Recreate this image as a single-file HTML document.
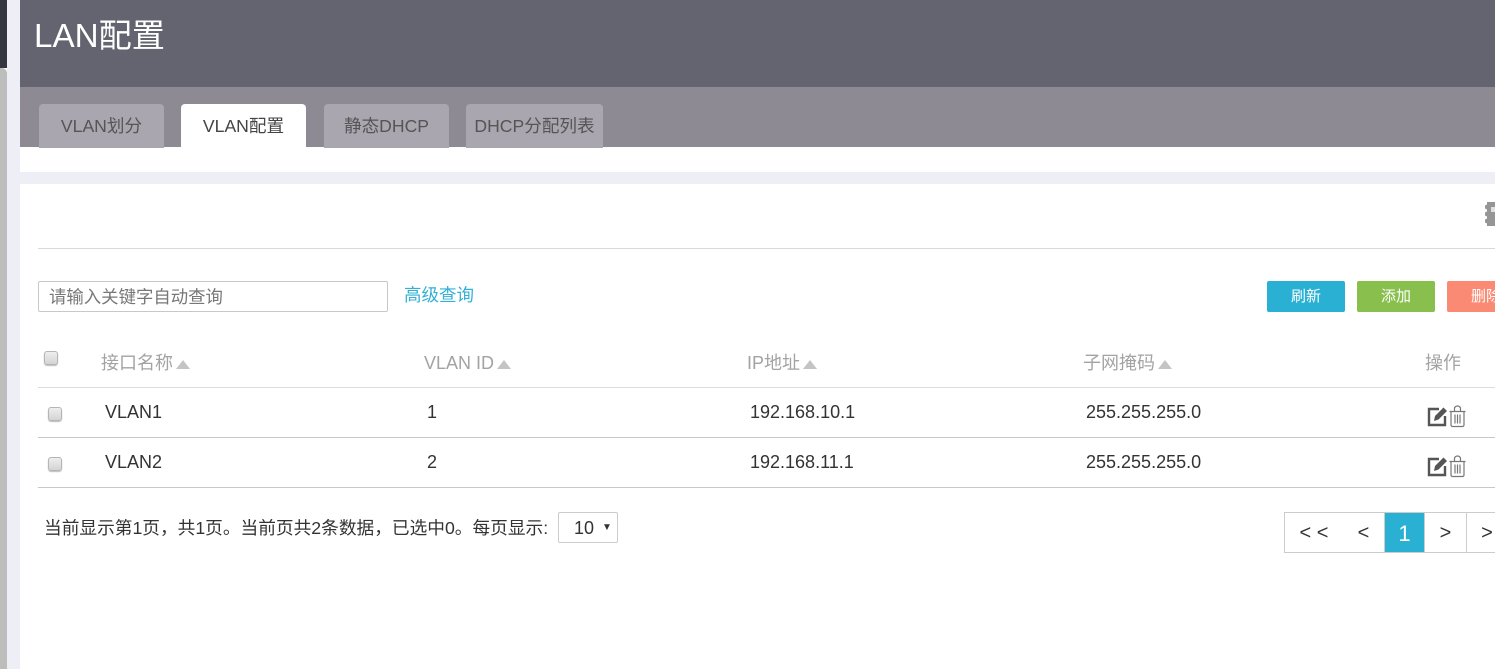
<!DOCTYPE html>
<html><head><meta charset="utf-8"><style>
html,body{margin:0;padding:0;width:1495px;height:669px;overflow:hidden;background:#fff;font-family:"Liberation Sans","Noto Sans CJK SC",sans-serif;color:#333}
.a{position:absolute;white-space:nowrap}
.tab{position:absolute;top:104px;height:44px;background:#aaa6b0;border-radius:4px 4px 0 0;text-align:center;line-height:45px;font-size:17.6px;color:#555}
.h{position:absolute;top:351px;font-size:18px;line-height:24px;color:#a3a3a3;white-space:nowrap}
.h i{display:inline-block;width:0;height:0;border-left:7px solid transparent;border-right:7px solid transparent;border-bottom:9px solid #c4c4c4;margin-left:3px;vertical-align:0}
.c{position:absolute;font-size:18px;line-height:24px;color:#333;white-space:nowrap}
.cb{position:absolute;width:12px;height:12px;border:1px solid #b5b5b5;border-radius:3px;background:linear-gradient(#eee,#d4d4d4);box-shadow:0 1px 1px #bbb}
.line{position:absolute;left:38px;width:1457px;height:1px}
.btn{position:absolute;top:281px;width:78px;height:31px;border-radius:2px;color:#fff;text-align:center;line-height:32px;font-size:15px}
.pg{position:absolute;top:512px;height:39px;border:1px solid #ccc;border-left:none;background:#fff;text-align:center;line-height:41px;font-size:20px;color:#333}
</style></head><body>
<div class="a" style="left:0;top:0;width:7px;height:68px;background:#33353f"></div>
<div class="a" style="left:0;top:68px;width:7px;height:601px;background:#bdbdbb;border-radius:0 5px 0 0"></div>
<div class="a" style="left:7px;top:0;width:13px;height:669px;background:#eeeef7"></div>
<div class="a" style="left:20px;top:0;width:1475px;height:87px;background:#636470"></div>
<div class="a" style="left:20px;top:87px;width:1475px;height:60px;background:#8d8a94"></div>
<div class="a" style="left:19px;top:172px;width:1476px;height:12px;background:#eeeef7"></div>
<div class="a" style="left:34px;top:15px;font-size:33.200px;line-height:44px;color:#fff">LAN配置</div>

<div class="tab" style="left:39px;width:125px">VLAN划分</div>
<div class="tab" style="left:181px;width:125px;background:#fff;height:43px;color:#444">VLAN配置</div>
<div class="tab" style="left:324px;width:125px">静态DHCP</div>
<div class="tab" style="left:466px;width:137px">DHCP分配列表</div>

<svg class="a" style="left:1484px;top:201px" width="11" height="26" viewBox="0 0 11 26"><path d="M3 1h8v24H3v-2.500l-2-1v-3l2-1v-2l-2-1v-3l2-1v-2l-2-1v-3l2-1z" fill="#959595"/><rect x="7" y="6" width="4" height="5" fill="#e0e0e0"/></svg>
<div class="line" style="top:248px;background:#d9d9d9"></div>

<div class="a" style="left:38px;top:281px;height:29px;border:1px solid #c8c8c8;border-radius:2px;padding-left:10px;font-size:17.4px;line-height:31px;color:#777;width:338px">请输入关键字自动查询</div>
<div class="a" style="left:404px;top:283px;font-size:17.5px;line-height:25px;color:#33b0d6">高级查询</div>
<div class="btn" style="left:1267px;background:#29b0d2">刷新</div>
<div class="btn" style="left:1357px;background:#88bf4d">添加</div>
<div class="btn" style="left:1447px;background:#fb8a74">删除</div>

<div class="cb" style="left:44px;top:351px"></div>
<div class="h" style="left:101px">接口名称<i></i></div>
<div class="h" style="left:424px">VLAN ID<i></i></div>
<div class="h" style="left:747px">IP地址<i></i></div>
<div class="h" style="left:1083px">子网掩码<i></i></div>
<div class="h" style="left:1425px">操作</div>
<div class="line" style="top:387px;background:#dcdcdc"></div>

<div class="cb" style="left:48px;top:407px"></div>
<div class="c" style="left:105px;top:400px">VLAN1</div>
<div class="c" style="left:427px;top:400px">1</div>
<div class="c" style="left:750px;top:400px">192.168.10.1</div>
<div class="c" style="left:1086px;top:400px">255.255.255.0</div>
<svg class="a" style="left:1427px;top:404px" width="42" height="24" viewBox="0 0 42 24" fill="none"><path d="M12 5H2V21H18V12" stroke="#555" stroke-width="2.400"/><path d="M7 17l1-5 8.500-8.500 3.500 3.500-8.500 8.500z" fill="#555"/><path d="M22.500 7.500h16M24 7.500V21a1.500 1.500 0 0 0 1.500 1.500h10A1.500 1.500 0 0 0 37 21V7.500M27.500 7V4.500a3 2.500 0 0 1 6 0V7M28 10.500v9M30.500 10.500v9M33 10.500v9" stroke="#777" stroke-width="1.200"/></svg>
<div class="line" style="top:437px;background:#c8c8c8"></div>

<div class="cb" style="left:48px;top:457px"></div>
<div class="c" style="left:105px;top:450px">VLAN2</div>
<div class="c" style="left:427px;top:450px">2</div>
<div class="c" style="left:750px;top:450px">192.168.11.1</div>
<div class="c" style="left:1086px;top:450px">255.255.255.0</div>
<svg class="a" style="left:1427px;top:454px" width="42" height="24" viewBox="0 0 42 24" fill="none"><path d="M12 5H2V21H18V12" stroke="#555" stroke-width="2.400"/><path d="M7 17l1-5 8.500-8.500 3.500 3.500-8.500 8.500z" fill="#555"/><path d="M22.500 7.500h16M24 7.500V21a1.500 1.500 0 0 0 1.500 1.500h10A1.500 1.500 0 0 0 37 21V7.500M27.500 7V4.500a3 2.500 0 0 1 6 0V7M28 10.500v9M30.500 10.500v9M33 10.500v9" stroke="#777" stroke-width="1.200"/></svg>
<div class="line" style="top:487px;background:#c8c8c8"></div>

<div class="a" style="left:44px;top:516px;font-size:17.7px;line-height:24px;color:#333">当前显示第1页，共1页。当前页共2条数据，已选中0。每页显示:</div>
<div class="a" style="left:558px;top:512px;width:58px;height:29px;border:1px solid #ccc;border-radius:2px;font-size:18px;line-height:31px;color:#333"><span style="margin-left:15px">10</span><span style="position:absolute;left:43px;top:-1px;font-size:10px">▼</span></div>

<div class="pg" style="left:1284px;width:58px;border-left:1px solid #ccc">&lt; &lt;</div>
<div class="pg" style="left:1343px;width:41px">&lt;</div>
<div class="pg" style="left:1385px;width:39px;background:#29b0d2;color:#fff;border-color:#ccc;border-left:none;font-size:22px">1</div>
<div class="pg" style="left:1425px;width:41px">&gt;</div>
<div class="pg" style="left:1467px;width:40px;border-right:none">&gt;</div>
</body></html>
